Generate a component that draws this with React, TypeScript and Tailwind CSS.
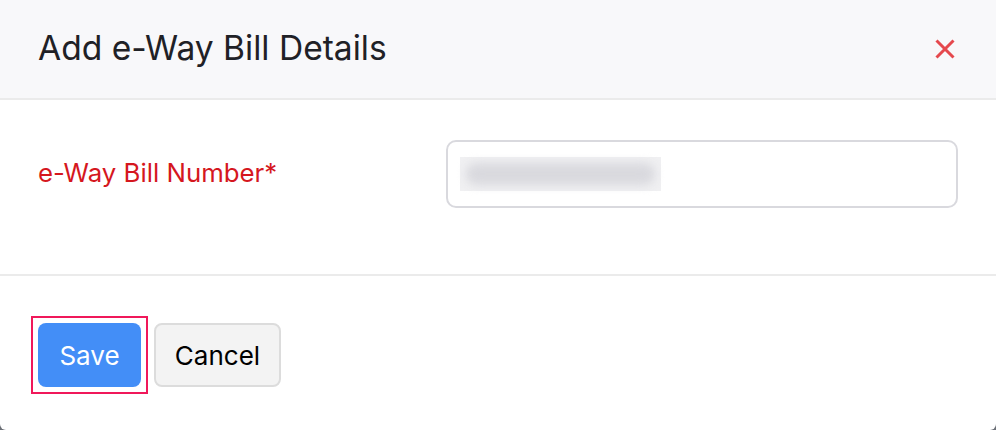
export default function App() {
  return (
    <div className="h-[430px] w-[996px] bg-[#6b6f76] font-['Inter','Liberation_Sans',sans-serif]">
      <div className="flex h-full w-full flex-col overflow-hidden rounded-b-[6px] bg-white">
        <header className="flex h-[100px] items-center justify-between border-b-2 border-[#ebebeb] bg-[#f8f8fa] pl-[38px] pr-[40px]">
          <h1 className="pb-[2px] text-[33.6px] font-normal text-[#1f2126]">Add e-Way Bill Details</h1>
          <button className="flex h-[22px] w-[22px] items-center justify-center text-[#e5484d]">
            <svg width="20" height="20" viewBox="0 0 20 20" fill="none" stroke="currentColor" strokeWidth="3">
              <path d="M1.5 1.5 18.5 18.5M18.5 1.5 1.5 18.5" />
            </svg>
          </button>
        </header>

        <div className="flex h-[176px] items-start border-b-2 border-[#ebebeb] pl-[38px] pr-[38px] pt-[40px]">
          <label className="mt-[14px] w-[408px] text-[25.8px] text-[#d5171e]">e-Way Bill Number*</label>
          <div className="flex h-[68px] flex-1 items-center rounded-[10px] border-2 border-[#d9d9de] px-[12px]">
            <div className="h-[34px] w-[201px] bg-[#f0f0f2] p-[6px]">
              <div className="h-full w-full rounded-full bg-[#d9d9de] blur-[5px]" />
            </div>
          </div>
        </div>

        <footer className="flex items-center pl-[31px] pt-[40px]">
          <div className="border-2 border-[#f0185a] p-[5px]">
            <button className="h-[64px] w-[103px] rounded-[8px] bg-[#438ef7] text-[26px] text-white">Save</button>
          </div>
          <button className="ml-[6px] h-[64px] w-[127px] rounded-[8px] border-2 border-[#dcdcdc] bg-[#f3f3f3] text-[26px] text-black">
            Cancel
          </button>
        </footer>
      </div>
    </div>
  );
}
